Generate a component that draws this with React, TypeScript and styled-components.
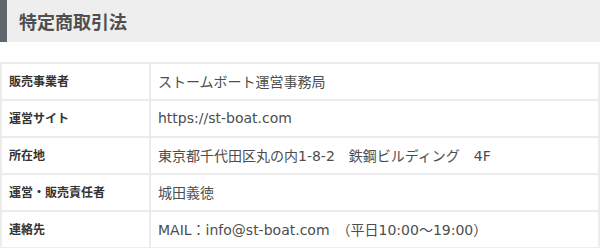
import styled, { createGlobalStyle } from "styled-components";

const GlobalStyle = createGlobalStyle`
    body {
        margin: 0;
        background: #fff;
        font-family: "Noto Sans CJK JP", "Noto Sans", sans-serif;
    }
`;

const Section = styled.section`
    width: 600px;
`;

const Heading = styled.h2`
    margin: 0 0 20px;
    height: 42px;
    box-sizing: border-box;
    display: flex;
    align-items: center;
    padding-left: 12px;
    border-left: 7px solid #61656c;
    background: #eeeeee;
    color: #4f4f4f;
    font-size: 18px;
    font-weight: 700;
    line-height: 1;
`;

const Table = styled.table`
    width: 600px;
    border-collapse: collapse;
    table-layout: fixed;
`;

const Row = styled.tr`
    height: 37px;
`;

const Label = styled.th`
    width: 149px;
    box-sizing: border-box;
    padding: 0 7px 3px;
    border: 2px solid #ececec;
    text-align: left;
    vertical-align: middle;
    color: #333;
    font-size: 12px;
    font-weight: 700;
`;

const Value = styled.td`
    box-sizing: border-box;
    padding: 0 7px 2px;
    border: 2px solid #ececec;
    color: #4d4d4d;
    font-family: "DejaVu Sans", "Noto Sans CJK JP", sans-serif;
    font-size: 14px;
    vertical-align: middle;
`;

const rows = [
    ["販売事業者", "ストームボート運営事務局"],
    ["運営サイト", "https://st-boat.com"],
    ["所在地", "東京都千代田区丸の内1-8-2\u3000鉄鋼ビルディング\u30004F"],
    ["運営・販売責任者", "城田義徳"],
    ["連絡先", "MAIL：info@st-boat.com\u3000（平日10:00〜19:00）"],
];

const App = () => {
    return (
        <>
            <GlobalStyle />
            <Section>
                <Heading>特定商取引法</Heading>
                <Table>
                    <tbody>
                        {rows.map(([label, value]) => (
                            <Row key={label}>
                                <Label>{label}</Label>
                                <Value>{value}</Value>
                            </Row>
                        ))}
                    </tbody>
                </Table>
            </Section>
        </>
    );
};

export default App;
